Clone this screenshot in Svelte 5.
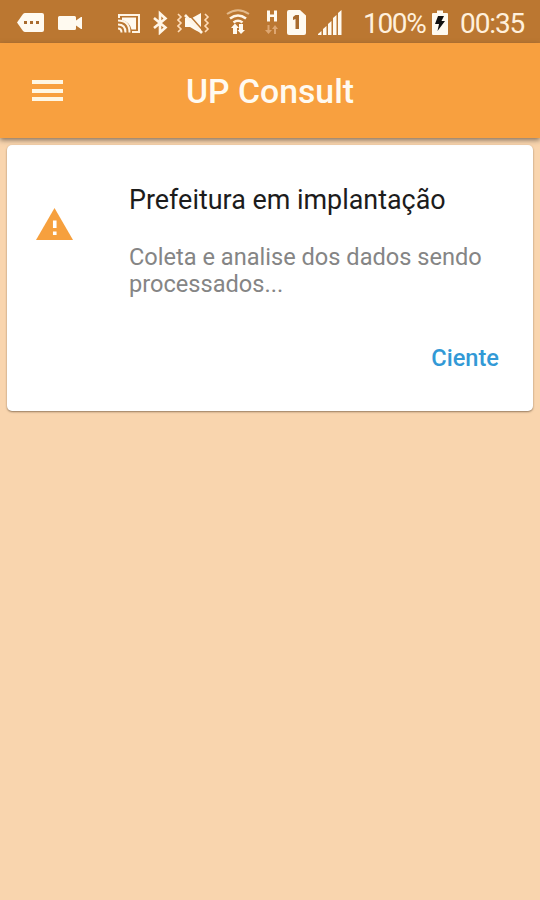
<script lang="ts">
  let {
    title = "UP Consult",
    heading = "Prefeitura em implantação",
    message = "Coleta e analise dos dados sendo processados...",
    action = "Ciente",
    battery = 100,
    time = "00:35",
  } = $props();

  let bars = [3, 8, 13, 19, 24];
</script>

<div class="screen">
  <div class="status">
    <div class="group">
      <svg width="27" height="26" viewBox="0 0 27 26">
        <path d="M8 4h17q2 0 2 2v15q0 2-2 2H8q-1 0-2-1L0 13.500l6-8.500q1-1 2-1z" />
        <path class="cut" d="M7 12h3v3H7zM13 12h3v3h-3zM19 12h3v3h-3z" />
      </svg>
      <svg width="24" height="26" viewBox="0 0 24 26">
        <path d="M1.500 7h15q1.500 0 1.500 1.500v3l5-3.500h1v12h-1l-5-3.500v3q0 1.500-1.500 1.500h-15Q0 21 0 19.500v-11Q0 7 1.500 7z" />
      </svg>
    </div>
    <div class="group system">
      <svg width="22" height="26" viewBox="0 0 22 26">
        <path class="line" d="M1 9V6h20v17h-7" />
        <path d="M4 8.500h14v12h-4.500Q11.500 12.500 4 11z" />
        <path class="line" d="M0 11.500q11.500 0 11.500 12M0 15.500q7.500 0 7.500 8M0 19.500q3.500 0 3.500 4" />
      </svg>
      <svg class="bluetooth" width="16" height="26" viewBox="0 0 16 26">
        <path class="line thick" d="M2 9l11.500 9.500L8 23.500v-19l5.500 5L2 19" />
      </svg>
      <svg class="mute" width="33" height="26" viewBox="0 0 33 26">
        <path d="M8 9h7l9-5v20l-6-3-5-3H8z" />
        <path class="slash" d="M10.500 4l16 18" />
        <path class="line thick" d="M8 6l17 18" />
        <path class="wave" d="M1 5l3 3-3 3 3 3-3 3 3 3-3 3M28 5l3 3-3 3 3 3-3 3 3 3-3 3" />
      </svg>
      <svg class="wifi" width="24" height="26" viewBox="0 0 24 26">
        <path class="line faint" d="M1 5q11-7.500 22 0" />
        <path class="line thick" d="M4 9.500q8-6 16 0M7.500 13.500q4.500-3.500 9 0" />
        <path d="M9 14.500L13 19h-2v6H7v-6H5zM15 25L11.500 21H13v-6h4v6h2z" />
      </svg>
      <svg class="data" width="13" height="26" viewBox="0 0 13 26">
        <path d="M2 1.500h3v4h4v-4h3v11H9V8H5v4.500H2z" />
        <path class="dim" d="M3.500 25L0 21h2.500v-5h2v5H7zM10 16l3 4h-2v5H9v-5H7z" />
      </svg>
      <svg class="sim" width="19" height="26" viewBox="0 0 19 26">
        <path d="M2 1h11l6 5.500V24q0 2-2 2H2q-2 0-2-2V3q0-2 2-2z" />
        <path class="cut" d="M8.500 6H12v14H8.500V10L6 11V8z" />
      </svg>
      <svg class="signal" width="24" height="26" viewBox="0 0 24 26">
        {#each bars as h, i}
          <path d={`M${i * 5} ${28 - h}l3.500-3V26h-3.500z`} />
        {/each}
      </svg>
      <span class="percent">{battery}%</span>
      <svg class="battery" width="16" height="26" viewBox="0 0 16 26">
        <path d="M5 1.500h6V4h4q1 0 1 1v20q0 1-1 1H1q-1 0-1-1V5q0-1 1-1h4z" />
        <path class="bolt" d="M6 7h6l-2.500 5H13L5.500 22l1.500-7H3z" />
      </svg>
      <span class="time">{time}</span>
    </div>
  </div>

  <header>
    <button class="menu" aria-label="Menu"><i></i><i></i><i></i></button>
    <h1>{title}</h1>
  </header>

  <main>
    <section class="card">
      <svg class="warning" width="37" height="32" viewBox="0 0 36 32" preserveAspectRatio="none">
        <path d="M18 0l18 32H0z" />
        <path class="mark" d="M16.500 12.500h3.500v7.500h-3.500zM16.500 23.500h3.500v3.500h-3.500z" />
      </svg>
      <div class="body">
        <h2>{heading}</h2>
        <p>{message}</p>
        <button class="action">{action}</button>
      </div>
    </section>
  </main>
</div>

<style>
  :global(body) { background: #f9d5ae; }
  .screen { height: 900px; display: flex; flex-direction: column; overflow: hidden; background: #f9d5ae; font-family: Roboto, "Liberation Sans", sans-serif; }
  h1, h2, p { margin: 0; font-weight: 400; }
  button { padding: 0; background: transparent; border: none; font-family: inherit; cursor: pointer; }
  svg { display: block; flex: none; fill: #fffaf0; }

  .status { height: 43px; box-sizing: border-box; flex: none; display: flex; justify-content: space-between; padding: 9px 16px 0 17px; background: #bb7731; color: #fff0dc; }
  .group { display: flex; gap: 14px; }
  .system { gap: 0; }
  .cut { fill: #a86b2e; }
  .line { fill: none; stroke: #fff5e6; stroke-width: 2; }
  .thick { stroke-width: 2.6; }
  .slash { fill: none; stroke: #bb7731; stroke-width: 1.5; }
  .wave { fill: none; stroke: #ffdcb8; stroke-width: 1.6; }
  .faint { stroke: #e3b98a; }
  .dim { fill: #dda671; }
  .bolt { fill: #111; }
  .bluetooth { margin-left: 12px; }
  .mute { margin-left: 9px; }
  .wifi { margin-left: 16px; }
  .data { margin-left: 15px; }
  .sim { margin-left: 9px; }
  .signal { margin-left: 12px; }
  .percent, .time { font-size: 28px; line-height: 30px; white-space: nowrap; }
  .percent { width: 62px; margin-left: 21px; letter-spacing: -1.3px; }
  .battery { margin-left: 7px; }
  .time { width: 65px; margin-left: 12px; letter-spacing: -1.1px; }
  .time { margin-right: -1px; }

  header { position: relative; z-index: 1; height: 95px; flex: none; display: grid; grid-template-columns: 63px 1fr 63px; align-items: center; background: #f8a03f; box-shadow: 0 2px 5px rgba(70, 60, 50, 0.65); }
  h1 { padding-top: 2px; text-align: center; color: #fffaf0; font-size: 33.75px; font-weight: 500; line-height: 40px; }
  .menu { width: 31px; margin-left: 32px; display: flex; flex-direction: column; gap: 4.500px; }
  .menu i { height: 4px; background: #fff7e4; }

  main { padding: 7px 7px 0; }
  .card { height: 266px; box-sizing: border-box; display: flex; padding: 37px 34px 0 29px; background: #fff; border-radius: 5px; box-shadow: 0 1px 2px rgba(80, 60, 40, 0.6); }
  .warning { margin-top: 26px; fill: #f6a03e; }
  .mark { fill: #fff; }
  .body { flex: 1; display: flex; flex-direction: column; margin-left: 56px; }
  h2 { color: #1c1c1c; font-size: 26.9px; line-height: 36px; white-space: nowrap; }
  p { width: 370px; margin-top: 26px; color: #858585; font-size: 23.6px; line-height: 27px; }
  .action { align-self: flex-end; margin-top: 46px; color: #3299d6; font-size: 23.6px; font-weight: 500; line-height: 28px; }
</style>
